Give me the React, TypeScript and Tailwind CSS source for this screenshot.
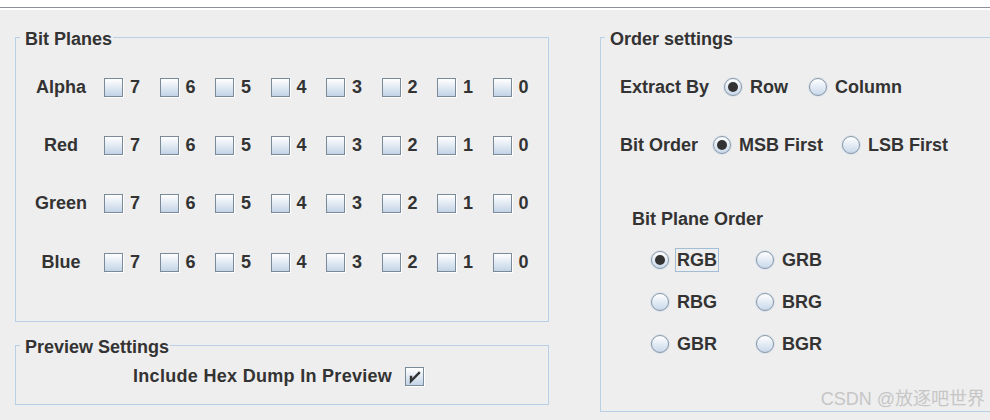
import type { ReactNode } from 'react';

// Swing Metal look: light blue etched borders, gradient boxes, bold Dialog text.

function CheckBox({ checked = false }: { checked?: boolean }) {
  return (
    <span className="flex h-[19px] w-[19px] shrink-0 items-center justify-center border border-[#7a8a99] bg-gradient-to-b from-white to-[#c3d4e6] shadow-[1px_1px_0_#ffffff]">
      {checked && (
        <svg width="17" height="17" viewBox="0 0 17 17">
          <path d="M5 9 L5 13 L13 5" fill="none" stroke="#333333" strokeWidth="2.4" strokeLinecap="square" />
        </svg>
      )}
    </span>
  );
}

function Radio({ selected = false }: { selected?: boolean }) {
  return (
    <span className="flex h-[18px] w-[18px] shrink-0 items-center justify-center rounded-full border border-[#8696a6] bg-gradient-to-b from-white to-[#c8d8ea] shadow-[0_0_0_1px_#d9e2ec]">
      {selected && <span className="h-[10px] w-[10px] rounded-full bg-[#333333]" />}
    </span>
  );
}

function Group({ title, className, children }: { title: string; className: string; children: ReactNode }) {
  return (
    <fieldset className={`border border-[#b8cfe5] ${className}`}>
      <legend className="ml-[4px] pl-[5px] pr-[1px] text-[18px] leading-[21px] font-bold">
        <span className="relative top-[2px]">{title}</span>
      </legend>
      {children}
    </fieldset>
  );
}

const CHANNELS = ['Alpha', 'Red', 'Green', 'Blue'];
const BITS = [7, 6, 5, 4, 3, 2, 1, 0];

function BitRow({ name }: { name: string }) {
  return (
    <div className="flex h-[58.3px] items-center pl-[4px]">
      <span className="w-[82px] text-center">{name}</span>
      <div className="ml-[2px] flex">
        {BITS.map((b) => (
          <div key={b} className="flex w-[55.5px] items-center">
            <CheckBox />
            <span className="ml-[7px]">{b}</span>
          </div>
        ))}
      </div>
    </div>
  );
}

function Choice({ label, selected = false, focused = false }: { label: string; selected?: boolean; focused?: boolean }) {
  return (
    <div className="flex items-center">
      <Radio selected={selected} />
      {focused ? (
        <span className="ml-[6px] border border-[#a3bdd6] px-[1px] leading-[22px]">{label}</span>
      ) : (
        <span className="ml-[8px] leading-[22px]">{label}</span>
      )}
    </div>
  );
}

export default function App() {
  return (
    <div className="relative h-[420px] w-[990px] overflow-hidden bg-[#eeeeee] font-['Liberation_Sans',Arial,sans-serif] text-[18px] font-bold text-[#333333]">
      <div className="h-[7px] bg-white" />
      <div className="h-px bg-[#8b9096]" />
      <div className="h-[2px] bg-white" />

      <div className="flex">
        <div className="ml-[15px] flex w-[534px] flex-col">
          <Group title="Bit Planes" className="mt-[17px] h-[295px] pt-[10px]">
            {CHANNELS.map((c) => (
              <BitRow key={c} name={c} />
            ))}
          </Group>

          <Group title="Preview Settings" className="mt-[13px] h-[70px] pt-[7px]">
            <div className="flex items-center pl-[117px]">
              <span className="tracking-[0.3px]">Include Hex Dump In Preview</span>
              <span className="ml-[13px]">
                <CheckBox checked />
              </span>
            </div>
          </Group>
        </div>

        <Group title="Order settings" className="mt-[17px] ml-[51px] h-[385px] w-[400px] shrink-0 pt-[10px]">
          <div className="flex h-[58px] items-center pl-[19px]">
            <span>Extract By</span>
            <div className="ml-[15px] flex gap-[21px]">
              <Choice label="Row" selected />
              <Choice label="Column" />
            </div>
          </div>
          <div className="flex h-[58px] items-center pl-[19px]">
            <span>Bit Order</span>
            <div className="ml-[15px] flex gap-[19px]">
              <Choice label="MSB First" selected />
              <Choice label="LSB First" />
            </div>
          </div>

          <div className="mt-[34px] pl-[31px] leading-[22px]">Bit Plane Order</div>

          <div className="mt-[9px] grid w-[200px] grid-cols-[105px_95px] pl-[50px]">
            <div className="flex h-[42px] items-center"><Choice label="RGB" selected focused /></div>
            <div className="flex h-[42px] items-center"><Choice label="GRB" /></div>
            <div className="flex h-[42px] items-center"><Choice label="RBG" /></div>
            <div className="flex h-[42px] items-center"><Choice label="BRG" /></div>
            <div className="flex h-[42px] items-center"><Choice label="GBR" /></div>
            <div className="flex h-[42px] items-center"><Choice label="BGR" /></div>
          </div>
        </Group>
      </div>

      <span className="absolute bottom-[7px] right-[5px] font-['Liberation_Sans','Noto_Sans_CJK_SC',sans-serif] text-[18px] font-normal text-[#c6c6c6]">
        CSDN @放逐吧世界
      </span>
    </div>
  );
}
